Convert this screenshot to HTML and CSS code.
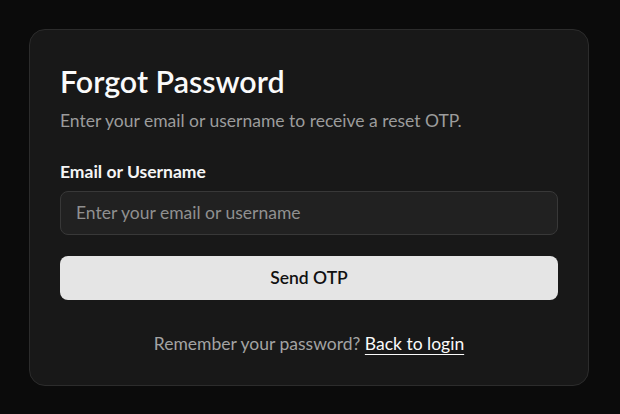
FILE: index.html
```html
<!DOCTYPE html>
<html lang="en">
<head>
<meta charset="utf-8">
<title>Forgot Password</title>
<link rel="stylesheet" href="styles.css">
</head>
<body>
<main class="page">
  <form class="card">
    <h1 class="title">Forgot Password</h1>
    <p class="subtitle">Enter your email or username to receive a reset OTP.</p>
    <label class="label" for="identity">Email or Username</label>
    <input class="input" id="identity" type="text" placeholder="Enter your email or username">
    <button class="button" type="button">Send OTP</button>
    <p class="footer">Remember your password? <a class="link" href="#">Back to login</a></p>
  </form>
</main>
</body>
</html>
```
FILE: styles.css
```css
* { box-sizing: border-box; }
html, body { margin: 0; padding: 0; }
body {
  background: #0b0b0b;
  font-family: Lato, "Open Sans", sans-serif;
  color: #fff;
}
.page {
  min-height: 100vh;
  display: flex;
  align-items: center;
  justify-content: center;
  padding-right: 2px;
}
.card {
  width: 560px;
  background: #181818;
  border: 1px solid #2c2c2c;
  border-radius: 16px;
  padding: 31px 30px 29px;
  display: flex;
  flex-direction: column;
}
.title {
  margin: 0;
  font-size: 30.4px;
  line-height: 40px;
  font-weight: 600;
  color: #fafafa;
}
.subtitle {
  margin: 6px 0 0;
  font-size: 17.5px;
  line-height: 27px;
  color: #9c9c9c;
}
.label {
  margin-top: 26px;
  font-size: 17.5px;
  line-height: 24px;
  font-weight: 700;
  color: #f5f5f5;
}
.input {
  margin-top: 7px;
  height: 44px;
  width: 100%;
  background: #212121;
  border: 1px solid #383838;
  border-radius: 8px;
  padding: 0 15px;
  font-family: inherit;
  font-size: 17.5px;
  color: #f5f5f5;
  outline: none;
}
.input::placeholder { color: #909090; }
.button {
  margin-top: 21px;
  height: 44px;
  width: 100%;
  background: #e5e5e5;
  border: none;
  border-radius: 8px;
  font-family: inherit;
  font-size: 17.5px;
  font-weight: 600;
  color: #111;
  cursor: pointer;
}
.footer {
  margin: 32px 0 0;
  text-align: center;
  font-size: 17.5px;
  line-height: 24px;
  color: #a3a3a3;
}
.link {
  color: #fafafa;
  text-decoration: underline;
  text-underline-offset: 4px;
  text-decoration-thickness: 1px;
}
```
